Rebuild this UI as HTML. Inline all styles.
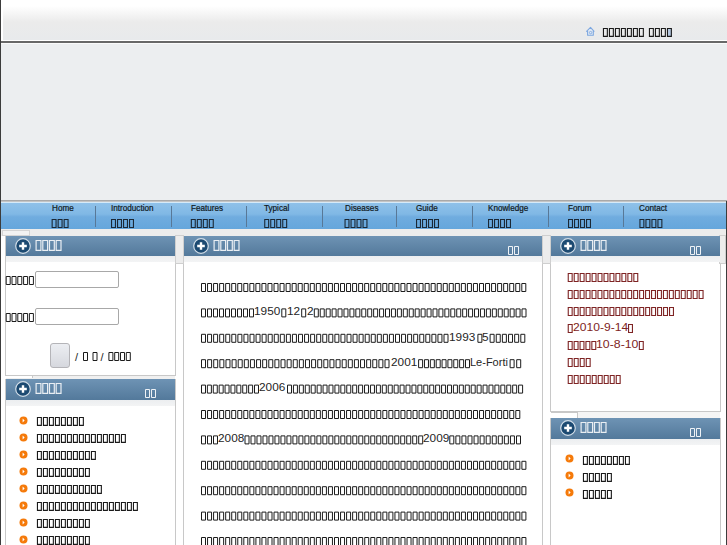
<!DOCTYPE html><html><head><meta charset="utf-8"><style>
*{margin:0;padding:0}
html,body{width:727px;height:545px;overflow:hidden;background:#fff;position:relative;font-family:"Liberation Sans",sans-serif}
i,span,div,svg{position:absolute;display:block}
span{white-space:nowrap;line-height:1}
.b{width:3px;height:7px;border:1px solid #3a3a3a}
.bd{width:3px;height:7px;border:1px solid #1e1e1e;box-shadow:inset 0 0 0 0.5px rgba(0,0,0,.35)}
.br{width:3px;height:7px;border:1px solid #7e2424}
.bh{width:3px;height:8px;border:1.5px solid #e9eef3}
.bm{width:3px;height:6px;border:1px solid #eef2f6}
.bn{width:3px;height:7px;border:1px solid #1b2835}
.tx{color:#262626}
.pl{overflow:visible}
.ph{background:linear-gradient(#6e93b4,#53799b)}
.pb{height:6px;background:linear-gradient(#eceef0,#f3f4f5)}
.nv{color:#0e1720;-webkit-text-stroke:0.2px #0e1720}.tx2{color:#222}.rt{color:#7e2424}</style></head><body>
<div style="left:0;top:0;width:727px;height:40px;background:linear-gradient(#fff 0,#fff 6px,#ebebeb 22px,#e8eaec 40px)"></div>
<div style="left:0;top:40px;width:727px;height:1px;background:#fff"></div>
<div style="left:0;top:41px;width:727px;height:2px;background:#686868"></div>
<div style="left:0;top:43px;width:727px;height:1px;background:#fafafa"></div>
<div style="left:0;top:44px;width:727px;height:156px;background:#eceef0"></div>
<div style="left:0;top:200px;width:727px;height:2px;background:linear-gradient(#a9a9a9 50%,#c4c4c4 50%)"></div>
<div style="left:0;top:202px;width:727px;height:27px;background:linear-gradient(#d6eaf8 0,#d6eaf8 1px,#8fc1e9 1px,#80b8e5 45%,#70acdf 55%,#65a6dc)"></div>
<div style="left:0;top:229px;width:727px;height:7px;background:#ececec"></div>
<div style="left:1px;top:0;width:2px;height:40px;background:#fff"></div>
<div style="left:2px;top:229.5px;width:26px;height:4px;border:1px solid #d4d4d4;background:#f2f2f2"></div>
<div style="left:0;top:0;width:1px;height:545px;background:#3c3c3c"></div>
<svg class="pl" style="left:582px;top:24px" width="18" height="14" viewBox="0 0 18 14"><path d="M4.3 7.6L8.5 3.3L12.3 7.6M5.6 7V11.3H11.3V7" fill="#e2eaf5" stroke="#7ea8e0" stroke-width="1.1" stroke-linejoin="round"/><circle cx="8.6" cy="8.6" r="1.2" fill="none" stroke="#7ea8e0" stroke-width="0.9"/></svg>
<div style="left:668px;top:28px;width:4px;height:9px;background:#9db8dc;opacity:.7"></div>
<div style="left:95.1px;top:206px;width:1px;height:21px;background:#587897"></div>
<div style="left:171.0px;top:206px;width:1px;height:21px;background:#587897"></div>
<div style="left:245.5px;top:206px;width:1px;height:21px;background:#587897"></div>
<div style="left:322.0px;top:206px;width:1px;height:21px;background:#587897"></div>
<div style="left:396.3px;top:206px;width:1px;height:21px;background:#587897"></div>
<div style="left:472.2px;top:206px;width:1px;height:21px;background:#587897"></div>
<div style="left:547.8px;top:206px;width:1px;height:21px;background:#587897"></div>
<div style="left:622.8px;top:206px;width:1px;height:21px;background:#587897"></div>
<span class="nv" style="left:51.60px;top:203.9px;font-size:8.8px;transform:scaleX(0.925);transform-origin:0 0">Home</span>
<span class="nv" style="left:111.00px;top:203.9px;font-size:8.8px;transform:scaleX(0.925);transform-origin:0 0">Introduction</span>
<span class="nv" style="left:190.80px;top:203.9px;font-size:8.8px;transform:scaleX(0.925);transform-origin:0 0">Features</span>
<span class="nv" style="left:264.20px;top:203.9px;font-size:8.8px;transform:scaleX(0.925);transform-origin:0 0">Typical</span>
<span class="nv" style="left:344.50px;top:203.9px;font-size:8.8px;transform:scaleX(0.925);transform-origin:0 0">Diseases</span>
<span class="nv" style="left:416.00px;top:203.9px;font-size:8.8px;transform:scaleX(0.925);transform-origin:0 0">Guide</span>
<span class="nv" style="left:488.00px;top:203.9px;font-size:8.8px;transform:scaleX(0.925);transform-origin:0 0">Knowledge</span>
<span class="nv" style="left:568.00px;top:203.9px;font-size:8.8px;transform:scaleX(0.925);transform-origin:0 0">Forum</span>
<span class="nv" style="left:639.40px;top:203.9px;font-size:8.8px;transform:scaleX(0.925);transform-origin:0 0">Contact</span>
<div style="left:5px;top:236px;width:169px;height:138px;border:1px solid #c8c8c8"></div>
<div style="left:5px;top:379px;width:169px;height:180px;border:1px solid #c8c8c8"></div>
<div style="left:183px;top:236px;width:358px;height:320px;border:1px solid #c8c8c8"></div>
<div style="left:550px;top:236px;width:169px;height:174px;border:1px solid #c8c8c8"></div>
<div style="left:550px;top:418px;width:169px;height:140px;border:1px solid #c8c8c8"></div>
<div style="left:175px;top:235px;width:7px;height:27px;background:#ececec;border:1px solid #cfcfcf"></div>
<div style="left:542px;top:235px;width:7px;height:27px;background:#ececec;border:1px solid #cfcfcf"></div>
<div style="left:719px;top:235px;width:5px;height:27px;background:#ececec;border:1px solid #cfcfcf"></div>
<div style="left:6px;top:376px;width:169px;height:3px;background:#f0f0f0"></div>
<div style="left:6px;top:376px;width:26px;height:2px;background:#fff;border-right:1px solid #c8c8c8"></div>
<div style="left:551px;top:412px;width:169px;height:6px;background:#f5f5f5"></div>
<div style="left:551px;top:412px;width:26px;height:5px;background:#fff;border-right:1px solid #c8c8c8;border-top:1px solid #c8c8c8"></div>
<div class="ph" style="left:6px;top:236px;width:169px;height:20px"></div>
<div class="pb" style="left:6px;top:256px;width:169px"></div>
<svg class="pl" style="left:15.3px;top:238.0px" width="16" height="16" viewBox="0 0 16 16"><circle cx="8" cy="8" r="7.3" fill="#1c4a72" stroke="#d3dee8" stroke-width="1.2"/><path d="M8 4.2V11.8M4.2 8H11.8" stroke="#fff" stroke-width="2.4"/></svg>
<div class="ph" style="left:184px;top:236px;width:358px;height:20px"></div>
<div class="pb" style="left:184px;top:256px;width:358px"></div>
<svg class="pl" style="left:193.3px;top:238.0px" width="16" height="16" viewBox="0 0 16 16"><circle cx="8" cy="8" r="7.3" fill="#1c4a72" stroke="#d3dee8" stroke-width="1.2"/><path d="M8 4.2V11.8M4.2 8H11.8" stroke="#fff" stroke-width="2.4"/></svg>
<div class="ph" style="left:551px;top:236px;width:169px;height:20px"></div>
<div class="pb" style="left:551px;top:256px;width:169px"></div>
<svg class="pl" style="left:560.3px;top:238.0px" width="16" height="16" viewBox="0 0 16 16"><circle cx="8" cy="8" r="7.3" fill="#1c4a72" stroke="#d3dee8" stroke-width="1.2"/><path d="M8 4.2V11.8M4.2 8H11.8" stroke="#fff" stroke-width="2.4"/></svg>
<div class="ph" style="left:6px;top:379px;width:169px;height:21px"></div>
<div class="pb" style="left:6px;top:400px;width:169px"></div>
<svg class="pl" style="left:15.3px;top:381.0px" width="16" height="16" viewBox="0 0 16 16"><circle cx="8" cy="8" r="7.3" fill="#1c4a72" stroke="#d3dee8" stroke-width="1.2"/><path d="M8 4.2V11.8M4.2 8H11.8" stroke="#fff" stroke-width="2.4"/></svg>
<div class="ph" style="left:551px;top:418px;width:169px;height:21px"></div>
<div class="pb" style="left:551px;top:439px;width:169px"></div>
<svg class="pl" style="left:560.3px;top:420.0px" width="16" height="16" viewBox="0 0 16 16"><circle cx="8" cy="8" r="7.3" fill="#1c4a72" stroke="#d3dee8" stroke-width="1.2"/><path d="M8 4.2V11.8M4.2 8H11.8" stroke="#fff" stroke-width="2.4"/></svg>
<div style="left:35px;top:271px;width:82px;height:15px;border:1px solid #a8a8a8;border-radius:2px;background:#fff"></div>
<div style="left:35px;top:308px;width:82px;height:15px;border:1px solid #a8a8a8;border-radius:2px;background:#fff"></div>
<div style="left:50px;top:343px;width:18px;height:23px;border:1px solid #b4b4b8;border-radius:3px;background:linear-gradient(#eceef2,#d6d8de)"></div>
<span class="tx2" style="left:75.00px;top:351.5px;font-size:11px;">/</span>
<span class="tx2" style="left:100.50px;top:351.5px;font-size:11px;">/</span>
<svg class="pl" style="left:18.6px;top:415.5px" width="9" height="9" viewBox="0 0 9 9"><circle cx="4.5" cy="4.5" r="4" fill="#f57a0a"/><path d="M3.6 2.6L5.6 4.5L3.6 6.4Z" fill="#fff"/></svg>
<svg class="pl" style="left:18.6px;top:432.5px" width="9" height="9" viewBox="0 0 9 9"><circle cx="4.5" cy="4.5" r="4" fill="#f57a0a"/><path d="M3.6 2.6L5.6 4.5L3.6 6.4Z" fill="#fff"/></svg>
<svg class="pl" style="left:18.6px;top:449.5px" width="9" height="9" viewBox="0 0 9 9"><circle cx="4.5" cy="4.5" r="4" fill="#f57a0a"/><path d="M3.6 2.6L5.6 4.5L3.6 6.4Z" fill="#fff"/></svg>
<svg class="pl" style="left:18.6px;top:466.5px" width="9" height="9" viewBox="0 0 9 9"><circle cx="4.5" cy="4.5" r="4" fill="#f57a0a"/><path d="M3.6 2.6L5.6 4.5L3.6 6.4Z" fill="#fff"/></svg>
<svg class="pl" style="left:18.6px;top:483.5px" width="9" height="9" viewBox="0 0 9 9"><circle cx="4.5" cy="4.5" r="4" fill="#f57a0a"/><path d="M3.6 2.6L5.6 4.5L3.6 6.4Z" fill="#fff"/></svg>
<svg class="pl" style="left:18.6px;top:500.5px" width="9" height="9" viewBox="0 0 9 9"><circle cx="4.5" cy="4.5" r="4" fill="#f57a0a"/><path d="M3.6 2.6L5.6 4.5L3.6 6.4Z" fill="#fff"/></svg>
<svg class="pl" style="left:18.6px;top:517.5px" width="9" height="9" viewBox="0 0 9 9"><circle cx="4.5" cy="4.5" r="4" fill="#f57a0a"/><path d="M3.6 2.6L5.6 4.5L3.6 6.4Z" fill="#fff"/></svg>
<svg class="pl" style="left:18.6px;top:534.5px" width="9" height="9" viewBox="0 0 9 9"><circle cx="4.5" cy="4.5" r="4" fill="#f57a0a"/><path d="M3.6 2.6L5.6 4.5L3.6 6.4Z" fill="#fff"/></svg>
<span class="rt" style="left:573.00px;top:321.9px;font-size:11px;transform:scaleX(1.1);transform-origin:0 0">2010-9-14</span>
<span class="rt" style="left:596.30px;top:338.9px;font-size:11px;transform:scaleX(1.12);transform-origin:0 0">10-8-10</span>
<svg class="pl" style="left:564.5px;top:454.0px" width="9" height="9" viewBox="0 0 9 9"><circle cx="4.5" cy="4.5" r="4" fill="#f57a0a"/><path d="M3.6 2.6L5.6 4.5L3.6 6.4Z" fill="#fff"/></svg>
<svg class="pl" style="left:564.5px;top:471.0px" width="9" height="9" viewBox="0 0 9 9"><circle cx="4.5" cy="4.5" r="4" fill="#f57a0a"/><path d="M3.6 2.6L5.6 4.5L3.6 6.4Z" fill="#fff"/></svg>
<svg class="pl" style="left:564.5px;top:488.0px" width="9" height="9" viewBox="0 0 9 9"><circle cx="4.5" cy="4.5" r="4" fill="#f57a0a"/><path d="M3.6 2.6L5.6 4.5L3.6 6.4Z" fill="#fff"/></svg>
<span class="tx" style="left:254.40px;top:307.2px;font-size:10px;transform:scaleX(1.18);transform-origin:0 0">1950</span>
<span class="tx" style="left:287.20px;top:307.2px;font-size:10px;transform:scaleX(1.18);transform-origin:0 0">12</span>
<span class="tx" style="left:306.80px;top:307.2px;font-size:10px;transform:scaleX(1.18);transform-origin:0 0">2</span>
<span class="tx" style="left:449.40px;top:332.6px;font-size:10px;transform:scaleX(1.18);transform-origin:0 0">1993</span>
<span class="tx" style="left:482.00px;top:332.6px;font-size:10px;transform:scaleX(1.18);transform-origin:0 0">5</span>
<span class="tx" style="left:390.50px;top:358.0px;font-size:10px;transform:scaleX(1.18);transform-origin:0 0">2001</span>
<span class="tx" style="left:470.00px;top:358.0px;font-size:10px;transform:scaleX(1.1);transform-origin:0 0">Le-Forti</span>
<span class="tx" style="left:259.30px;top:383.4px;font-size:10px;transform:scaleX(1.18);transform-origin:0 0">2006</span>
<span class="tx" style="left:218.00px;top:434.2px;font-size:10px;transform:scaleX(1.18);transform-origin:0 0">2008</span>
<span class="tx" style="left:423.20px;top:434.2px;font-size:10px;transform:scaleX(1.18);transform-origin:0 0">2009</span>
<svg style="left:0;top:0" width="727" height="545" viewBox="0 0 727 545" fill="none">
<path stroke="#1a1a1a" stroke-width="1.1" d="M603.45 28.45h3.90v7.90h-3.90zM609.45 28.45h3.90v7.90h-3.90zM615.45 28.45h3.90v7.90h-3.90zM621.45 28.45h3.90v7.90h-3.90zM627.45 28.45h3.90v7.90h-3.90zM633.45 28.45h3.90v7.90h-3.90zM639.45 28.45h3.90v7.90h-3.90zM649.45 28.45h3.90v7.90h-3.90zM655.45 28.45h3.90v7.90h-3.90zM661.45 28.45h3.90v7.90h-3.90zM667.45 28.45h3.90v7.90h-3.90zM37.45 417.45h3.90v7.90h-3.90zM43.45 417.45h3.90v7.90h-3.90zM49.45 417.45h3.90v7.90h-3.90zM55.45 417.45h3.90v7.90h-3.90zM61.45 417.45h3.90v7.90h-3.90zM67.45 417.45h3.90v7.90h-3.90zM73.45 417.45h3.90v7.90h-3.90zM79.45 417.45h3.90v7.90h-3.90zM37.45 434.45h3.90v7.90h-3.90zM43.45 434.45h3.90v7.90h-3.90zM49.45 434.45h3.90v7.90h-3.90zM55.45 434.45h3.90v7.90h-3.90zM61.45 434.45h3.90v7.90h-3.90zM67.45 434.45h3.90v7.90h-3.90zM73.45 434.45h3.90v7.90h-3.90zM79.45 434.45h3.90v7.90h-3.90zM85.45 434.45h3.90v7.90h-3.90zM91.45 434.45h3.90v7.90h-3.90zM97.45 434.45h3.90v7.90h-3.90zM103.45 434.45h3.90v7.90h-3.90zM109.45 434.45h3.90v7.90h-3.90zM115.45 434.45h3.90v7.90h-3.90zM121.45 434.45h3.90v7.90h-3.90zM37.45 451.45h3.90v7.90h-3.90zM43.45 451.45h3.90v7.90h-3.90zM49.45 451.45h3.90v7.90h-3.90zM55.45 451.45h3.90v7.90h-3.90zM61.45 451.45h3.90v7.90h-3.90zM67.45 451.45h3.90v7.90h-3.90zM73.45 451.45h3.90v7.90h-3.90zM79.45 451.45h3.90v7.90h-3.90zM85.45 451.45h3.90v7.90h-3.90zM91.45 451.45h3.90v7.90h-3.90zM37.45 468.45h3.90v7.90h-3.90zM43.45 468.45h3.90v7.90h-3.90zM49.45 468.45h3.90v7.90h-3.90zM55.45 468.45h3.90v7.90h-3.90zM61.45 468.45h3.90v7.90h-3.90zM67.45 468.45h3.90v7.90h-3.90zM73.45 468.45h3.90v7.90h-3.90zM79.45 468.45h3.90v7.90h-3.90zM85.45 468.45h3.90v7.90h-3.90zM37.45 485.45h3.90v7.90h-3.90zM43.45 485.45h3.90v7.90h-3.90zM49.45 485.45h3.90v7.90h-3.90zM55.45 485.45h3.90v7.90h-3.90zM61.45 485.45h3.90v7.90h-3.90zM67.45 485.45h3.90v7.90h-3.90zM73.45 485.45h3.90v7.90h-3.90zM79.45 485.45h3.90v7.90h-3.90zM85.45 485.45h3.90v7.90h-3.90zM91.45 485.45h3.90v7.90h-3.90zM97.45 485.45h3.90v7.90h-3.90zM37.45 502.45h3.90v7.90h-3.90zM43.45 502.45h3.90v7.90h-3.90zM49.45 502.45h3.90v7.90h-3.90zM55.45 502.45h3.90v7.90h-3.90zM61.45 502.45h3.90v7.90h-3.90zM67.45 502.45h3.90v7.90h-3.90zM73.45 502.45h3.90v7.90h-3.90zM79.45 502.45h3.90v7.90h-3.90zM85.45 502.45h3.90v7.90h-3.90zM91.45 502.45h3.90v7.90h-3.90zM97.45 502.45h3.90v7.90h-3.90zM103.45 502.45h3.90v7.90h-3.90zM109.45 502.45h3.90v7.90h-3.90zM115.45 502.45h3.90v7.90h-3.90zM121.45 502.45h3.90v7.90h-3.90zM127.45 502.45h3.90v7.90h-3.90zM133.45 502.45h3.90v7.90h-3.90zM37.45 519.45h3.90v7.90h-3.90zM43.45 519.45h3.90v7.90h-3.90zM49.45 519.45h3.90v7.90h-3.90zM55.45 519.45h3.90v7.90h-3.90zM61.45 519.45h3.90v7.90h-3.90zM67.45 519.45h3.90v7.90h-3.90zM73.45 519.45h3.90v7.90h-3.90zM79.45 519.45h3.90v7.90h-3.90zM85.45 519.45h3.90v7.90h-3.90zM37.45 536.45h3.90v7.90h-3.90zM43.45 536.45h3.90v7.90h-3.90zM49.45 536.45h3.90v7.90h-3.90zM55.45 536.45h3.90v7.90h-3.90zM61.45 536.45h3.90v7.90h-3.90zM67.45 536.45h3.90v7.90h-3.90zM73.45 536.45h3.90v7.90h-3.90zM79.45 536.45h3.90v7.90h-3.90zM85.45 536.45h3.90v7.90h-3.90zM583.45 456.45h3.90v7.90h-3.90zM589.45 456.45h3.90v7.90h-3.90zM595.45 456.45h3.90v7.90h-3.90zM601.45 456.45h3.90v7.90h-3.90zM607.45 456.45h3.90v7.90h-3.90zM613.45 456.45h3.90v7.90h-3.90zM619.45 456.45h3.90v7.90h-3.90zM625.45 456.45h3.90v7.90h-3.90zM583.45 473.45h3.90v7.90h-3.90zM589.45 473.45h3.90v7.90h-3.90zM595.45 473.45h3.90v7.90h-3.90zM601.45 473.45h3.90v7.90h-3.90zM607.45 473.45h3.90v7.90h-3.90zM583.45 490.45h3.90v7.90h-3.90zM589.45 490.45h3.90v7.90h-3.90zM595.45 490.45h3.90v7.90h-3.90zM601.45 490.45h3.90v7.90h-3.90zM607.45 490.45h3.90v7.90h-3.90z"/>
<path stroke="#1b2835" stroke-width="1.1" d="M52.15 219.55h3.90v7.90h-3.90zM58.15 219.55h3.90v7.90h-3.90zM64.15 219.55h3.90v7.90h-3.90zM111.55 219.55h3.90v7.90h-3.90zM117.55 219.55h3.90v7.90h-3.90zM123.55 219.55h3.90v7.90h-3.90zM129.55 219.55h3.90v7.90h-3.90zM191.35 219.55h3.90v7.90h-3.90zM197.35 219.55h3.90v7.90h-3.90zM203.35 219.55h3.90v7.90h-3.90zM209.35 219.55h3.90v7.90h-3.90zM264.75 219.55h3.90v7.90h-3.90zM270.75 219.55h3.90v7.90h-3.90zM276.75 219.55h3.90v7.90h-3.90zM282.75 219.55h3.90v7.90h-3.90zM345.05 219.55h3.90v7.90h-3.90zM351.05 219.55h3.90v7.90h-3.90zM357.05 219.55h3.90v7.90h-3.90zM363.05 219.55h3.90v7.90h-3.90zM416.55 219.55h3.90v7.90h-3.90zM422.55 219.55h3.90v7.90h-3.90zM428.55 219.55h3.90v7.90h-3.90zM434.55 219.55h3.90v7.90h-3.90zM488.55 219.55h3.90v7.90h-3.90zM494.55 219.55h3.90v7.90h-3.90zM500.55 219.55h3.90v7.90h-3.90zM506.55 219.55h3.90v7.90h-3.90zM568.55 219.55h3.90v7.90h-3.90zM574.55 219.55h3.90v7.90h-3.90zM580.55 219.55h3.90v7.90h-3.90zM586.55 219.55h3.90v7.90h-3.90zM639.95 219.55h3.90v7.90h-3.90zM645.95 219.55h3.90v7.90h-3.90zM651.95 219.55h3.90v7.90h-3.90zM657.95 219.55h3.90v7.90h-3.90z"/>
<path stroke="#e9eef3" stroke-width="1.2" d="M36.10 240.50h4.80v9.80h-4.80zM42.80 240.50h4.80v9.80h-4.80zM49.50 240.50h4.80v9.80h-4.80zM56.20 240.50h4.80v9.80h-4.80zM214.10 240.50h4.80v9.80h-4.80zM220.80 240.50h4.80v9.80h-4.80zM227.50 240.50h4.80v9.80h-4.80zM234.20 240.50h4.80v9.80h-4.80zM581.10 240.50h4.80v9.80h-4.80zM587.80 240.50h4.80v9.80h-4.80zM594.50 240.50h4.80v9.80h-4.80zM601.20 240.50h4.80v9.80h-4.80zM36.10 383.50h4.80v9.80h-4.80zM42.80 383.50h4.80v9.80h-4.80zM49.50 383.50h4.80v9.80h-4.80zM56.20 383.50h4.80v9.80h-4.80zM581.10 422.50h4.80v9.80h-4.80zM587.80 422.50h4.80v9.80h-4.80zM594.50 422.50h4.80v9.80h-4.80zM601.20 422.50h4.80v9.80h-4.80z"/>
<path stroke="#eef2f6" stroke-width="1" d="M508.50 246.50h4.00v8.00h-4.00zM514.50 246.50h4.00v8.00h-4.00zM690.50 246.50h4.00v8.00h-4.00zM696.50 246.50h4.00v8.00h-4.00zM145.50 389.50h4.00v8.00h-4.00zM151.50 389.50h4.00v8.00h-4.00zM690.50 428.50h4.00v8.00h-4.00zM696.50 428.50h4.00v8.00h-4.00z"/>
<path stroke="#1c1c1c" stroke-width="1" d="M6.20 276.50h4.00v8.00h-4.00zM12.00 276.50h4.00v8.00h-4.00zM17.80 276.50h4.00v8.00h-4.00zM23.60 276.50h4.00v8.00h-4.00zM29.40 276.50h4.00v8.00h-4.00zM6.20 313.50h4.00v8.00h-4.00zM12.00 313.50h4.00v8.00h-4.00zM17.80 313.50h4.00v8.00h-4.00zM23.60 313.50h4.00v8.00h-4.00zM29.40 313.50h4.00v8.00h-4.00zM83.50 352.50h4.00v8.00h-4.00zM93.00 352.50h4.00v8.00h-4.00zM108.90 352.50h4.00v8.00h-4.00zM114.70 352.50h4.00v8.00h-4.00zM120.50 352.50h4.00v8.00h-4.00zM126.30 352.50h4.00v8.00h-4.00zM201.50 283.50h4.00v8.00h-4.00zM207.54 283.50h4.00v8.00h-4.00zM213.59 283.50h4.00v8.00h-4.00zM219.63 283.50h4.00v8.00h-4.00zM225.67 283.50h4.00v8.00h-4.00zM231.72 283.50h4.00v8.00h-4.00zM237.76 283.50h4.00v8.00h-4.00zM243.80 283.50h4.00v8.00h-4.00zM249.85 283.50h4.00v8.00h-4.00zM255.89 283.50h4.00v8.00h-4.00zM261.93 283.50h4.00v8.00h-4.00zM267.98 283.50h4.00v8.00h-4.00zM274.02 283.50h4.00v8.00h-4.00zM280.06 283.50h4.00v8.00h-4.00zM286.11 283.50h4.00v8.00h-4.00zM292.15 283.50h4.00v8.00h-4.00zM298.19 283.50h4.00v8.00h-4.00zM304.24 283.50h4.00v8.00h-4.00zM310.28 283.50h4.00v8.00h-4.00zM316.32 283.50h4.00v8.00h-4.00zM322.37 283.50h4.00v8.00h-4.00zM328.41 283.50h4.00v8.00h-4.00zM334.45 283.50h4.00v8.00h-4.00zM340.50 283.50h4.00v8.00h-4.00zM346.54 283.50h4.00v8.00h-4.00zM352.58 283.50h4.00v8.00h-4.00zM358.63 283.50h4.00v8.00h-4.00zM364.67 283.50h4.00v8.00h-4.00zM370.72 283.50h4.00v8.00h-4.00zM376.76 283.50h4.00v8.00h-4.00zM382.80 283.50h4.00v8.00h-4.00zM388.85 283.50h4.00v8.00h-4.00zM394.89 283.50h4.00v8.00h-4.00zM400.93 283.50h4.00v8.00h-4.00zM406.98 283.50h4.00v8.00h-4.00zM413.02 283.50h4.00v8.00h-4.00zM419.06 283.50h4.00v8.00h-4.00zM425.11 283.50h4.00v8.00h-4.00zM431.15 283.50h4.00v8.00h-4.00zM437.19 283.50h4.00v8.00h-4.00zM443.24 283.50h4.00v8.00h-4.00zM449.28 283.50h4.00v8.00h-4.00zM455.32 283.50h4.00v8.00h-4.00zM461.37 283.50h4.00v8.00h-4.00zM467.41 283.50h4.00v8.00h-4.00zM473.45 283.50h4.00v8.00h-4.00zM479.50 283.50h4.00v8.00h-4.00zM485.54 283.50h4.00v8.00h-4.00zM491.58 283.50h4.00v8.00h-4.00zM497.63 283.50h4.00v8.00h-4.00zM503.67 283.50h4.00v8.00h-4.00zM509.71 283.50h4.00v8.00h-4.00zM515.76 283.50h4.00v8.00h-4.00zM521.80 283.50h4.00v8.00h-4.00zM201.50 308.90h4.00v8.00h-4.00zM207.50 308.90h4.00v8.00h-4.00zM213.50 308.90h4.00v8.00h-4.00zM219.50 308.90h4.00v8.00h-4.00zM225.50 308.90h4.00v8.00h-4.00zM231.50 308.90h4.00v8.00h-4.00zM237.50 308.90h4.00v8.00h-4.00zM243.50 308.90h4.00v8.00h-4.00zM249.50 308.90h4.00v8.00h-4.00zM281.80 308.90h4.00v8.00h-4.00zM301.70 308.90h4.00v8.00h-4.00zM314.30 308.90h4.00v8.00h-4.00zM320.23 308.90h4.00v8.00h-4.00zM326.17 308.90h4.00v8.00h-4.00zM332.10 308.90h4.00v8.00h-4.00zM338.04 308.90h4.00v8.00h-4.00zM343.97 308.90h4.00v8.00h-4.00zM349.91 308.90h4.00v8.00h-4.00zM355.84 308.90h4.00v8.00h-4.00zM361.77 308.90h4.00v8.00h-4.00zM367.71 308.90h4.00v8.00h-4.00zM373.64 308.90h4.00v8.00h-4.00zM379.58 308.90h4.00v8.00h-4.00zM385.51 308.90h4.00v8.00h-4.00zM391.45 308.90h4.00v8.00h-4.00zM397.38 308.90h4.00v8.00h-4.00zM403.31 308.90h4.00v8.00h-4.00zM409.25 308.90h4.00v8.00h-4.00zM415.18 308.90h4.00v8.00h-4.00zM421.12 308.90h4.00v8.00h-4.00zM427.05 308.90h4.00v8.00h-4.00zM432.99 308.90h4.00v8.00h-4.00zM438.92 308.90h4.00v8.00h-4.00zM444.85 308.90h4.00v8.00h-4.00zM450.79 308.90h4.00v8.00h-4.00zM456.72 308.90h4.00v8.00h-4.00zM462.66 308.90h4.00v8.00h-4.00zM468.59 308.90h4.00v8.00h-4.00zM474.53 308.90h4.00v8.00h-4.00zM480.46 308.90h4.00v8.00h-4.00zM486.39 308.90h4.00v8.00h-4.00zM492.33 308.90h4.00v8.00h-4.00zM498.26 308.90h4.00v8.00h-4.00zM504.20 308.90h4.00v8.00h-4.00zM510.13 308.90h4.00v8.00h-4.00zM516.07 308.90h4.00v8.00h-4.00zM522.00 308.90h4.00v8.00h-4.00zM201.50 334.30h4.00v8.00h-4.00zM207.56 334.30h4.00v8.00h-4.00zM213.62 334.30h4.00v8.00h-4.00zM219.69 334.30h4.00v8.00h-4.00zM225.75 334.30h4.00v8.00h-4.00zM231.81 334.30h4.00v8.00h-4.00zM237.88 334.30h4.00v8.00h-4.00zM243.94 334.30h4.00v8.00h-4.00zM250.00 334.30h4.00v8.00h-4.00zM256.06 334.30h4.00v8.00h-4.00zM262.12 334.30h4.00v8.00h-4.00zM268.19 334.30h4.00v8.00h-4.00zM274.25 334.30h4.00v8.00h-4.00zM280.31 334.30h4.00v8.00h-4.00zM286.38 334.30h4.00v8.00h-4.00zM292.44 334.30h4.00v8.00h-4.00zM298.50 334.30h4.00v8.00h-4.00zM304.56 334.30h4.00v8.00h-4.00zM310.62 334.30h4.00v8.00h-4.00zM316.69 334.30h4.00v8.00h-4.00zM322.75 334.30h4.00v8.00h-4.00zM328.81 334.30h4.00v8.00h-4.00zM334.88 334.30h4.00v8.00h-4.00zM340.94 334.30h4.00v8.00h-4.00zM347.00 334.30h4.00v8.00h-4.00zM353.06 334.30h4.00v8.00h-4.00zM359.12 334.30h4.00v8.00h-4.00zM365.19 334.30h4.00v8.00h-4.00zM371.25 334.30h4.00v8.00h-4.00zM377.31 334.30h4.00v8.00h-4.00zM383.38 334.30h4.00v8.00h-4.00zM389.44 334.30h4.00v8.00h-4.00zM395.50 334.30h4.00v8.00h-4.00zM401.56 334.30h4.00v8.00h-4.00zM407.62 334.30h4.00v8.00h-4.00zM413.69 334.30h4.00v8.00h-4.00zM419.75 334.30h4.00v8.00h-4.00zM425.81 334.30h4.00v8.00h-4.00zM431.88 334.30h4.00v8.00h-4.00zM437.94 334.30h4.00v8.00h-4.00zM444.00 334.30h4.00v8.00h-4.00zM477.90 334.30h4.00v8.00h-4.00zM490.10 334.30h4.00v8.00h-4.00zM496.24 334.30h4.00v8.00h-4.00zM502.38 334.30h4.00v8.00h-4.00zM508.52 334.30h4.00v8.00h-4.00zM514.66 334.30h4.00v8.00h-4.00zM520.80 334.30h4.00v8.00h-4.00zM201.50 359.70h4.00v8.00h-4.00zM207.62 359.70h4.00v8.00h-4.00zM213.73 359.70h4.00v8.00h-4.00zM219.85 359.70h4.00v8.00h-4.00zM225.97 359.70h4.00v8.00h-4.00zM232.08 359.70h4.00v8.00h-4.00zM238.20 359.70h4.00v8.00h-4.00zM244.32 359.70h4.00v8.00h-4.00zM250.43 359.70h4.00v8.00h-4.00zM256.55 359.70h4.00v8.00h-4.00zM262.67 359.70h4.00v8.00h-4.00zM268.78 359.70h4.00v8.00h-4.00zM274.90 359.70h4.00v8.00h-4.00zM281.02 359.70h4.00v8.00h-4.00zM287.13 359.70h4.00v8.00h-4.00zM293.25 359.70h4.00v8.00h-4.00zM299.37 359.70h4.00v8.00h-4.00zM305.48 359.70h4.00v8.00h-4.00zM311.60 359.70h4.00v8.00h-4.00zM317.72 359.70h4.00v8.00h-4.00zM323.83 359.70h4.00v8.00h-4.00zM329.95 359.70h4.00v8.00h-4.00zM336.07 359.70h4.00v8.00h-4.00zM342.18 359.70h4.00v8.00h-4.00zM348.30 359.70h4.00v8.00h-4.00zM354.42 359.70h4.00v8.00h-4.00zM360.53 359.70h4.00v8.00h-4.00zM366.65 359.70h4.00v8.00h-4.00zM372.77 359.70h4.00v8.00h-4.00zM378.88 359.70h4.00v8.00h-4.00zM385.00 359.70h4.00v8.00h-4.00zM418.60 359.70h4.00v8.00h-4.00zM424.46 359.70h4.00v8.00h-4.00zM430.33 359.70h4.00v8.00h-4.00zM436.19 359.70h4.00v8.00h-4.00zM442.05 359.70h4.00v8.00h-4.00zM447.91 359.70h4.00v8.00h-4.00zM453.77 359.70h4.00v8.00h-4.00zM459.64 359.70h4.00v8.00h-4.00zM465.50 359.70h4.00v8.00h-4.00zM510.10 359.70h4.00v8.00h-4.00zM516.70 359.70h4.00v8.00h-4.00zM201.50 385.10h4.00v8.00h-4.00zM207.39 385.10h4.00v8.00h-4.00zM213.28 385.10h4.00v8.00h-4.00zM219.17 385.10h4.00v8.00h-4.00zM225.06 385.10h4.00v8.00h-4.00zM230.94 385.10h4.00v8.00h-4.00zM236.83 385.10h4.00v8.00h-4.00zM242.72 385.10h4.00v8.00h-4.00zM248.61 385.10h4.00v8.00h-4.00zM254.50 385.10h4.00v8.00h-4.00zM287.50 385.10h4.00v8.00h-4.00zM293.43 385.10h4.00v8.00h-4.00zM299.35 385.10h4.00v8.00h-4.00zM305.28 385.10h4.00v8.00h-4.00zM311.20 385.10h4.00v8.00h-4.00zM317.13 385.10h4.00v8.00h-4.00zM323.05 385.10h4.00v8.00h-4.00zM328.98 385.10h4.00v8.00h-4.00zM334.91 385.10h4.00v8.00h-4.00zM340.83 385.10h4.00v8.00h-4.00zM346.76 385.10h4.00v8.00h-4.00zM352.68 385.10h4.00v8.00h-4.00zM358.61 385.10h4.00v8.00h-4.00zM364.53 385.10h4.00v8.00h-4.00zM370.46 385.10h4.00v8.00h-4.00zM376.38 385.10h4.00v8.00h-4.00zM382.31 385.10h4.00v8.00h-4.00zM388.24 385.10h4.00v8.00h-4.00zM394.16 385.10h4.00v8.00h-4.00zM400.09 385.10h4.00v8.00h-4.00zM406.01 385.10h4.00v8.00h-4.00zM411.94 385.10h4.00v8.00h-4.00zM417.86 385.10h4.00v8.00h-4.00zM423.79 385.10h4.00v8.00h-4.00zM429.72 385.10h4.00v8.00h-4.00zM435.64 385.10h4.00v8.00h-4.00zM441.57 385.10h4.00v8.00h-4.00zM447.49 385.10h4.00v8.00h-4.00zM453.42 385.10h4.00v8.00h-4.00zM459.34 385.10h4.00v8.00h-4.00zM465.27 385.10h4.00v8.00h-4.00zM471.19 385.10h4.00v8.00h-4.00zM477.12 385.10h4.00v8.00h-4.00zM483.05 385.10h4.00v8.00h-4.00zM488.97 385.10h4.00v8.00h-4.00zM494.90 385.10h4.00v8.00h-4.00zM500.82 385.10h4.00v8.00h-4.00zM506.75 385.10h4.00v8.00h-4.00zM512.67 385.10h4.00v8.00h-4.00zM518.60 385.10h4.00v8.00h-4.00zM201.50 410.50h4.00v8.00h-4.00zM207.54 410.50h4.00v8.00h-4.00zM213.59 410.50h4.00v8.00h-4.00zM219.63 410.50h4.00v8.00h-4.00zM225.68 410.50h4.00v8.00h-4.00zM231.72 410.50h4.00v8.00h-4.00zM237.77 410.50h4.00v8.00h-4.00zM243.81 410.50h4.00v8.00h-4.00zM249.85 410.50h4.00v8.00h-4.00zM255.90 410.50h4.00v8.00h-4.00zM261.94 410.50h4.00v8.00h-4.00zM267.99 410.50h4.00v8.00h-4.00zM274.03 410.50h4.00v8.00h-4.00zM280.07 410.50h4.00v8.00h-4.00zM286.12 410.50h4.00v8.00h-4.00zM292.16 410.50h4.00v8.00h-4.00zM298.21 410.50h4.00v8.00h-4.00zM304.25 410.50h4.00v8.00h-4.00zM310.30 410.50h4.00v8.00h-4.00zM316.34 410.50h4.00v8.00h-4.00zM322.38 410.50h4.00v8.00h-4.00zM328.43 410.50h4.00v8.00h-4.00zM334.47 410.50h4.00v8.00h-4.00zM340.52 410.50h4.00v8.00h-4.00zM346.56 410.50h4.00v8.00h-4.00zM352.61 410.50h4.00v8.00h-4.00zM358.65 410.50h4.00v8.00h-4.00zM364.69 410.50h4.00v8.00h-4.00zM370.74 410.50h4.00v8.00h-4.00zM376.78 410.50h4.00v8.00h-4.00zM382.83 410.50h4.00v8.00h-4.00zM388.87 410.50h4.00v8.00h-4.00zM394.92 410.50h4.00v8.00h-4.00zM400.96 410.50h4.00v8.00h-4.00zM407.00 410.50h4.00v8.00h-4.00zM413.05 410.50h4.00v8.00h-4.00zM419.09 410.50h4.00v8.00h-4.00zM425.14 410.50h4.00v8.00h-4.00zM431.18 410.50h4.00v8.00h-4.00zM437.22 410.50h4.00v8.00h-4.00zM443.27 410.50h4.00v8.00h-4.00zM449.31 410.50h4.00v8.00h-4.00zM455.36 410.50h4.00v8.00h-4.00zM461.40 410.50h4.00v8.00h-4.00zM467.45 410.50h4.00v8.00h-4.00zM473.49 410.50h4.00v8.00h-4.00zM479.53 410.50h4.00v8.00h-4.00zM485.58 410.50h4.00v8.00h-4.00zM491.62 410.50h4.00v8.00h-4.00zM497.67 410.50h4.00v8.00h-4.00zM503.71 410.50h4.00v8.00h-4.00zM509.76 410.50h4.00v8.00h-4.00zM515.80 410.50h4.00v8.00h-4.00zM201.50 435.90h4.00v8.00h-4.00zM207.50 435.90h4.00v8.00h-4.00zM213.50 435.90h4.00v8.00h-4.00zM245.00 435.90h4.00v8.00h-4.00zM250.99 435.90h4.00v8.00h-4.00zM256.98 435.90h4.00v8.00h-4.00zM262.97 435.90h4.00v8.00h-4.00zM268.96 435.90h4.00v8.00h-4.00zM274.95 435.90h4.00v8.00h-4.00zM280.94 435.90h4.00v8.00h-4.00zM286.93 435.90h4.00v8.00h-4.00zM292.92 435.90h4.00v8.00h-4.00zM298.91 435.90h4.00v8.00h-4.00zM304.90 435.90h4.00v8.00h-4.00zM310.89 435.90h4.00v8.00h-4.00zM316.88 435.90h4.00v8.00h-4.00zM322.87 435.90h4.00v8.00h-4.00zM328.86 435.90h4.00v8.00h-4.00zM334.84 435.90h4.00v8.00h-4.00zM340.83 435.90h4.00v8.00h-4.00zM346.82 435.90h4.00v8.00h-4.00zM352.81 435.90h4.00v8.00h-4.00zM358.80 435.90h4.00v8.00h-4.00zM364.79 435.90h4.00v8.00h-4.00zM370.78 435.90h4.00v8.00h-4.00zM376.77 435.90h4.00v8.00h-4.00zM382.76 435.90h4.00v8.00h-4.00zM388.75 435.90h4.00v8.00h-4.00zM394.74 435.90h4.00v8.00h-4.00zM400.73 435.90h4.00v8.00h-4.00zM406.72 435.90h4.00v8.00h-4.00zM412.71 435.90h4.00v8.00h-4.00zM418.70 435.90h4.00v8.00h-4.00zM449.80 435.90h4.00v8.00h-4.00zM455.86 435.90h4.00v8.00h-4.00zM461.93 435.90h4.00v8.00h-4.00zM467.99 435.90h4.00v8.00h-4.00zM474.05 435.90h4.00v8.00h-4.00zM480.12 435.90h4.00v8.00h-4.00zM486.18 435.90h4.00v8.00h-4.00zM492.25 435.90h4.00v8.00h-4.00zM498.31 435.90h4.00v8.00h-4.00zM504.37 435.90h4.00v8.00h-4.00zM510.44 435.90h4.00v8.00h-4.00zM516.50 435.90h4.00v8.00h-4.00zM201.50 461.30h4.00v8.00h-4.00zM207.55 461.30h4.00v8.00h-4.00zM213.59 461.30h4.00v8.00h-4.00zM219.64 461.30h4.00v8.00h-4.00zM225.68 461.30h4.00v8.00h-4.00zM231.73 461.30h4.00v8.00h-4.00zM237.77 461.30h4.00v8.00h-4.00zM243.82 461.30h4.00v8.00h-4.00zM249.86 461.30h4.00v8.00h-4.00zM255.91 461.30h4.00v8.00h-4.00zM261.95 461.30h4.00v8.00h-4.00zM268.00 461.30h4.00v8.00h-4.00zM274.04 461.30h4.00v8.00h-4.00zM280.09 461.30h4.00v8.00h-4.00zM286.13 461.30h4.00v8.00h-4.00zM292.18 461.30h4.00v8.00h-4.00zM298.22 461.30h4.00v8.00h-4.00zM304.27 461.30h4.00v8.00h-4.00zM310.32 461.30h4.00v8.00h-4.00zM316.36 461.30h4.00v8.00h-4.00zM322.41 461.30h4.00v8.00h-4.00zM328.45 461.30h4.00v8.00h-4.00zM334.50 461.30h4.00v8.00h-4.00zM340.54 461.30h4.00v8.00h-4.00zM346.59 461.30h4.00v8.00h-4.00zM352.63 461.30h4.00v8.00h-4.00zM358.68 461.30h4.00v8.00h-4.00zM364.72 461.30h4.00v8.00h-4.00zM370.77 461.30h4.00v8.00h-4.00zM376.81 461.30h4.00v8.00h-4.00zM382.86 461.30h4.00v8.00h-4.00zM388.90 461.30h4.00v8.00h-4.00zM394.95 461.30h4.00v8.00h-4.00zM400.99 461.30h4.00v8.00h-4.00zM407.04 461.30h4.00v8.00h-4.00zM413.08 461.30h4.00v8.00h-4.00zM419.13 461.30h4.00v8.00h-4.00zM425.18 461.30h4.00v8.00h-4.00zM431.22 461.30h4.00v8.00h-4.00zM437.27 461.30h4.00v8.00h-4.00zM443.31 461.30h4.00v8.00h-4.00zM449.36 461.30h4.00v8.00h-4.00zM455.40 461.30h4.00v8.00h-4.00zM461.45 461.30h4.00v8.00h-4.00zM467.49 461.30h4.00v8.00h-4.00zM473.54 461.30h4.00v8.00h-4.00zM479.58 461.30h4.00v8.00h-4.00zM485.63 461.30h4.00v8.00h-4.00zM491.67 461.30h4.00v8.00h-4.00zM497.72 461.30h4.00v8.00h-4.00zM503.76 461.30h4.00v8.00h-4.00zM509.81 461.30h4.00v8.00h-4.00zM515.85 461.30h4.00v8.00h-4.00zM521.90 461.30h4.00v8.00h-4.00zM201.50 486.70h4.00v8.00h-4.00zM207.55 486.70h4.00v8.00h-4.00zM213.59 486.70h4.00v8.00h-4.00zM219.64 486.70h4.00v8.00h-4.00zM225.68 486.70h4.00v8.00h-4.00zM231.73 486.70h4.00v8.00h-4.00zM237.77 486.70h4.00v8.00h-4.00zM243.82 486.70h4.00v8.00h-4.00zM249.86 486.70h4.00v8.00h-4.00zM255.91 486.70h4.00v8.00h-4.00zM261.95 486.70h4.00v8.00h-4.00zM268.00 486.70h4.00v8.00h-4.00zM274.04 486.70h4.00v8.00h-4.00zM280.09 486.70h4.00v8.00h-4.00zM286.13 486.70h4.00v8.00h-4.00zM292.18 486.70h4.00v8.00h-4.00zM298.22 486.70h4.00v8.00h-4.00zM304.27 486.70h4.00v8.00h-4.00zM310.32 486.70h4.00v8.00h-4.00zM316.36 486.70h4.00v8.00h-4.00zM322.41 486.70h4.00v8.00h-4.00zM328.45 486.70h4.00v8.00h-4.00zM334.50 486.70h4.00v8.00h-4.00zM340.54 486.70h4.00v8.00h-4.00zM346.59 486.70h4.00v8.00h-4.00zM352.63 486.70h4.00v8.00h-4.00zM358.68 486.70h4.00v8.00h-4.00zM364.72 486.70h4.00v8.00h-4.00zM370.77 486.70h4.00v8.00h-4.00zM376.81 486.70h4.00v8.00h-4.00zM382.86 486.70h4.00v8.00h-4.00zM388.90 486.70h4.00v8.00h-4.00zM394.95 486.70h4.00v8.00h-4.00zM400.99 486.70h4.00v8.00h-4.00zM407.04 486.70h4.00v8.00h-4.00zM413.08 486.70h4.00v8.00h-4.00zM419.13 486.70h4.00v8.00h-4.00zM425.18 486.70h4.00v8.00h-4.00zM431.22 486.70h4.00v8.00h-4.00zM437.27 486.70h4.00v8.00h-4.00zM443.31 486.70h4.00v8.00h-4.00zM449.36 486.70h4.00v8.00h-4.00zM455.40 486.70h4.00v8.00h-4.00zM461.45 486.70h4.00v8.00h-4.00zM467.49 486.70h4.00v8.00h-4.00zM473.54 486.70h4.00v8.00h-4.00zM479.58 486.70h4.00v8.00h-4.00zM485.63 486.70h4.00v8.00h-4.00zM491.67 486.70h4.00v8.00h-4.00zM497.72 486.70h4.00v8.00h-4.00zM503.76 486.70h4.00v8.00h-4.00zM509.81 486.70h4.00v8.00h-4.00zM515.85 486.70h4.00v8.00h-4.00zM521.90 486.70h4.00v8.00h-4.00zM201.50 512.10h4.00v8.00h-4.00zM207.55 512.10h4.00v8.00h-4.00zM213.59 512.10h4.00v8.00h-4.00zM219.64 512.10h4.00v8.00h-4.00zM225.68 512.10h4.00v8.00h-4.00zM231.73 512.10h4.00v8.00h-4.00zM237.77 512.10h4.00v8.00h-4.00zM243.82 512.10h4.00v8.00h-4.00zM249.86 512.10h4.00v8.00h-4.00zM255.91 512.10h4.00v8.00h-4.00zM261.95 512.10h4.00v8.00h-4.00zM268.00 512.10h4.00v8.00h-4.00zM274.04 512.10h4.00v8.00h-4.00zM280.09 512.10h4.00v8.00h-4.00zM286.13 512.10h4.00v8.00h-4.00zM292.18 512.10h4.00v8.00h-4.00zM298.22 512.10h4.00v8.00h-4.00zM304.27 512.10h4.00v8.00h-4.00zM310.32 512.10h4.00v8.00h-4.00zM316.36 512.10h4.00v8.00h-4.00zM322.41 512.10h4.00v8.00h-4.00zM328.45 512.10h4.00v8.00h-4.00zM334.50 512.10h4.00v8.00h-4.00zM340.54 512.10h4.00v8.00h-4.00zM346.59 512.10h4.00v8.00h-4.00zM352.63 512.10h4.00v8.00h-4.00zM358.68 512.10h4.00v8.00h-4.00zM364.72 512.10h4.00v8.00h-4.00zM370.77 512.10h4.00v8.00h-4.00zM376.81 512.10h4.00v8.00h-4.00zM382.86 512.10h4.00v8.00h-4.00zM388.90 512.10h4.00v8.00h-4.00zM394.95 512.10h4.00v8.00h-4.00zM400.99 512.10h4.00v8.00h-4.00zM407.04 512.10h4.00v8.00h-4.00zM413.08 512.10h4.00v8.00h-4.00zM419.13 512.10h4.00v8.00h-4.00zM425.18 512.10h4.00v8.00h-4.00zM431.22 512.10h4.00v8.00h-4.00zM437.27 512.10h4.00v8.00h-4.00zM443.31 512.10h4.00v8.00h-4.00zM449.36 512.10h4.00v8.00h-4.00zM455.40 512.10h4.00v8.00h-4.00zM461.45 512.10h4.00v8.00h-4.00zM467.49 512.10h4.00v8.00h-4.00zM473.54 512.10h4.00v8.00h-4.00zM479.58 512.10h4.00v8.00h-4.00zM485.63 512.10h4.00v8.00h-4.00zM491.67 512.10h4.00v8.00h-4.00zM497.72 512.10h4.00v8.00h-4.00zM503.76 512.10h4.00v8.00h-4.00zM509.81 512.10h4.00v8.00h-4.00zM515.85 512.10h4.00v8.00h-4.00zM521.90 512.10h4.00v8.00h-4.00zM201.50 537.50h4.00v8.00h-4.00zM207.55 537.50h4.00v8.00h-4.00zM213.59 537.50h4.00v8.00h-4.00zM219.64 537.50h4.00v8.00h-4.00zM225.68 537.50h4.00v8.00h-4.00zM231.73 537.50h4.00v8.00h-4.00zM237.77 537.50h4.00v8.00h-4.00zM243.82 537.50h4.00v8.00h-4.00zM249.86 537.50h4.00v8.00h-4.00zM255.91 537.50h4.00v8.00h-4.00zM261.95 537.50h4.00v8.00h-4.00zM268.00 537.50h4.00v8.00h-4.00zM274.04 537.50h4.00v8.00h-4.00zM280.09 537.50h4.00v8.00h-4.00zM286.13 537.50h4.00v8.00h-4.00zM292.18 537.50h4.00v8.00h-4.00zM298.22 537.50h4.00v8.00h-4.00zM304.27 537.50h4.00v8.00h-4.00zM310.32 537.50h4.00v8.00h-4.00zM316.36 537.50h4.00v8.00h-4.00zM322.41 537.50h4.00v8.00h-4.00zM328.45 537.50h4.00v8.00h-4.00zM334.50 537.50h4.00v8.00h-4.00zM340.54 537.50h4.00v8.00h-4.00zM346.59 537.50h4.00v8.00h-4.00zM352.63 537.50h4.00v8.00h-4.00zM358.68 537.50h4.00v8.00h-4.00zM364.72 537.50h4.00v8.00h-4.00zM370.77 537.50h4.00v8.00h-4.00zM376.81 537.50h4.00v8.00h-4.00zM382.86 537.50h4.00v8.00h-4.00zM388.90 537.50h4.00v8.00h-4.00zM394.95 537.50h4.00v8.00h-4.00zM400.99 537.50h4.00v8.00h-4.00zM407.04 537.50h4.00v8.00h-4.00zM413.08 537.50h4.00v8.00h-4.00zM419.13 537.50h4.00v8.00h-4.00zM425.18 537.50h4.00v8.00h-4.00zM431.22 537.50h4.00v8.00h-4.00zM437.27 537.50h4.00v8.00h-4.00zM443.31 537.50h4.00v8.00h-4.00zM449.36 537.50h4.00v8.00h-4.00zM455.40 537.50h4.00v8.00h-4.00zM461.45 537.50h4.00v8.00h-4.00zM467.49 537.50h4.00v8.00h-4.00zM473.54 537.50h4.00v8.00h-4.00zM479.58 537.50h4.00v8.00h-4.00zM485.63 537.50h4.00v8.00h-4.00zM491.67 537.50h4.00v8.00h-4.00zM497.72 537.50h4.00v8.00h-4.00zM503.76 537.50h4.00v8.00h-4.00zM509.81 537.50h4.00v8.00h-4.00zM515.85 537.50h4.00v8.00h-4.00zM521.90 537.50h4.00v8.00h-4.00z"/>
<path stroke="#7e2424" stroke-width="1.1" d="M568.25 273.55h3.90v7.90h-3.90zM574.21 273.55h3.90v7.90h-3.90zM580.18 273.55h3.90v7.90h-3.90zM586.14 273.55h3.90v7.90h-3.90zM592.10 273.55h3.90v7.90h-3.90zM598.07 273.55h3.90v7.90h-3.90zM604.03 273.55h3.90v7.90h-3.90zM610.00 273.55h3.90v7.90h-3.90zM615.96 273.55h3.90v7.90h-3.90zM621.92 273.55h3.90v7.90h-3.90zM627.89 273.55h3.90v7.90h-3.90zM633.85 273.55h3.90v7.90h-3.90zM568.25 290.55h3.90v7.90h-3.90zM574.20 290.55h3.90v7.90h-3.90zM580.15 290.55h3.90v7.90h-3.90zM586.10 290.55h3.90v7.90h-3.90zM592.05 290.55h3.90v7.90h-3.90zM598.00 290.55h3.90v7.90h-3.90zM603.95 290.55h3.90v7.90h-3.90zM609.90 290.55h3.90v7.90h-3.90zM615.85 290.55h3.90v7.90h-3.90zM621.80 290.55h3.90v7.90h-3.90zM627.75 290.55h3.90v7.90h-3.90zM633.70 290.55h3.90v7.90h-3.90zM639.65 290.55h3.90v7.90h-3.90zM645.60 290.55h3.90v7.90h-3.90zM651.55 290.55h3.90v7.90h-3.90zM657.50 290.55h3.90v7.90h-3.90zM663.45 290.55h3.90v7.90h-3.90zM669.40 290.55h3.90v7.90h-3.90zM675.35 290.55h3.90v7.90h-3.90zM681.30 290.55h3.90v7.90h-3.90zM687.25 290.55h3.90v7.90h-3.90zM693.20 290.55h3.90v7.90h-3.90zM699.15 290.55h3.90v7.90h-3.90zM568.25 307.55h3.90v7.90h-3.90zM574.21 307.55h3.90v7.90h-3.90zM580.17 307.55h3.90v7.90h-3.90zM586.13 307.55h3.90v7.90h-3.90zM592.09 307.55h3.90v7.90h-3.90zM598.04 307.55h3.90v7.90h-3.90zM604.00 307.55h3.90v7.90h-3.90zM609.96 307.55h3.90v7.90h-3.90zM615.92 307.55h3.90v7.90h-3.90zM621.88 307.55h3.90v7.90h-3.90zM627.84 307.55h3.90v7.90h-3.90zM633.80 307.55h3.90v7.90h-3.90zM639.76 307.55h3.90v7.90h-3.90zM645.71 307.55h3.90v7.90h-3.90zM651.67 307.55h3.90v7.90h-3.90zM657.63 307.55h3.90v7.90h-3.90zM663.59 307.55h3.90v7.90h-3.90zM669.55 307.55h3.90v7.90h-3.90zM568.25 324.55h3.90v7.90h-3.90zM628.55 324.55h3.90v7.90h-3.90zM568.25 341.55h3.90v7.90h-3.90zM574.15 341.55h3.90v7.90h-3.90zM580.05 341.55h3.90v7.90h-3.90zM585.95 341.55h3.90v7.90h-3.90zM591.85 341.55h3.90v7.90h-3.90zM639.35 341.55h3.90v7.90h-3.90zM568.25 358.55h3.90v7.90h-3.90zM574.25 358.55h3.90v7.90h-3.90zM580.25 358.55h3.90v7.90h-3.90zM586.25 358.55h3.90v7.90h-3.90zM568.25 375.55h3.90v7.90h-3.90zM574.25 375.55h3.90v7.90h-3.90zM580.25 375.55h3.90v7.90h-3.90zM586.25 375.55h3.90v7.90h-3.90zM592.25 375.55h3.90v7.90h-3.90zM598.25 375.55h3.90v7.90h-3.90zM604.25 375.55h3.90v7.90h-3.90zM610.25 375.55h3.90v7.90h-3.90zM616.25 375.55h3.90v7.90h-3.90z"/>
</svg>
<div style="left:726px;top:201px;width:1px;height:344px;background:#3c3c3c"></div>
</body></html>
